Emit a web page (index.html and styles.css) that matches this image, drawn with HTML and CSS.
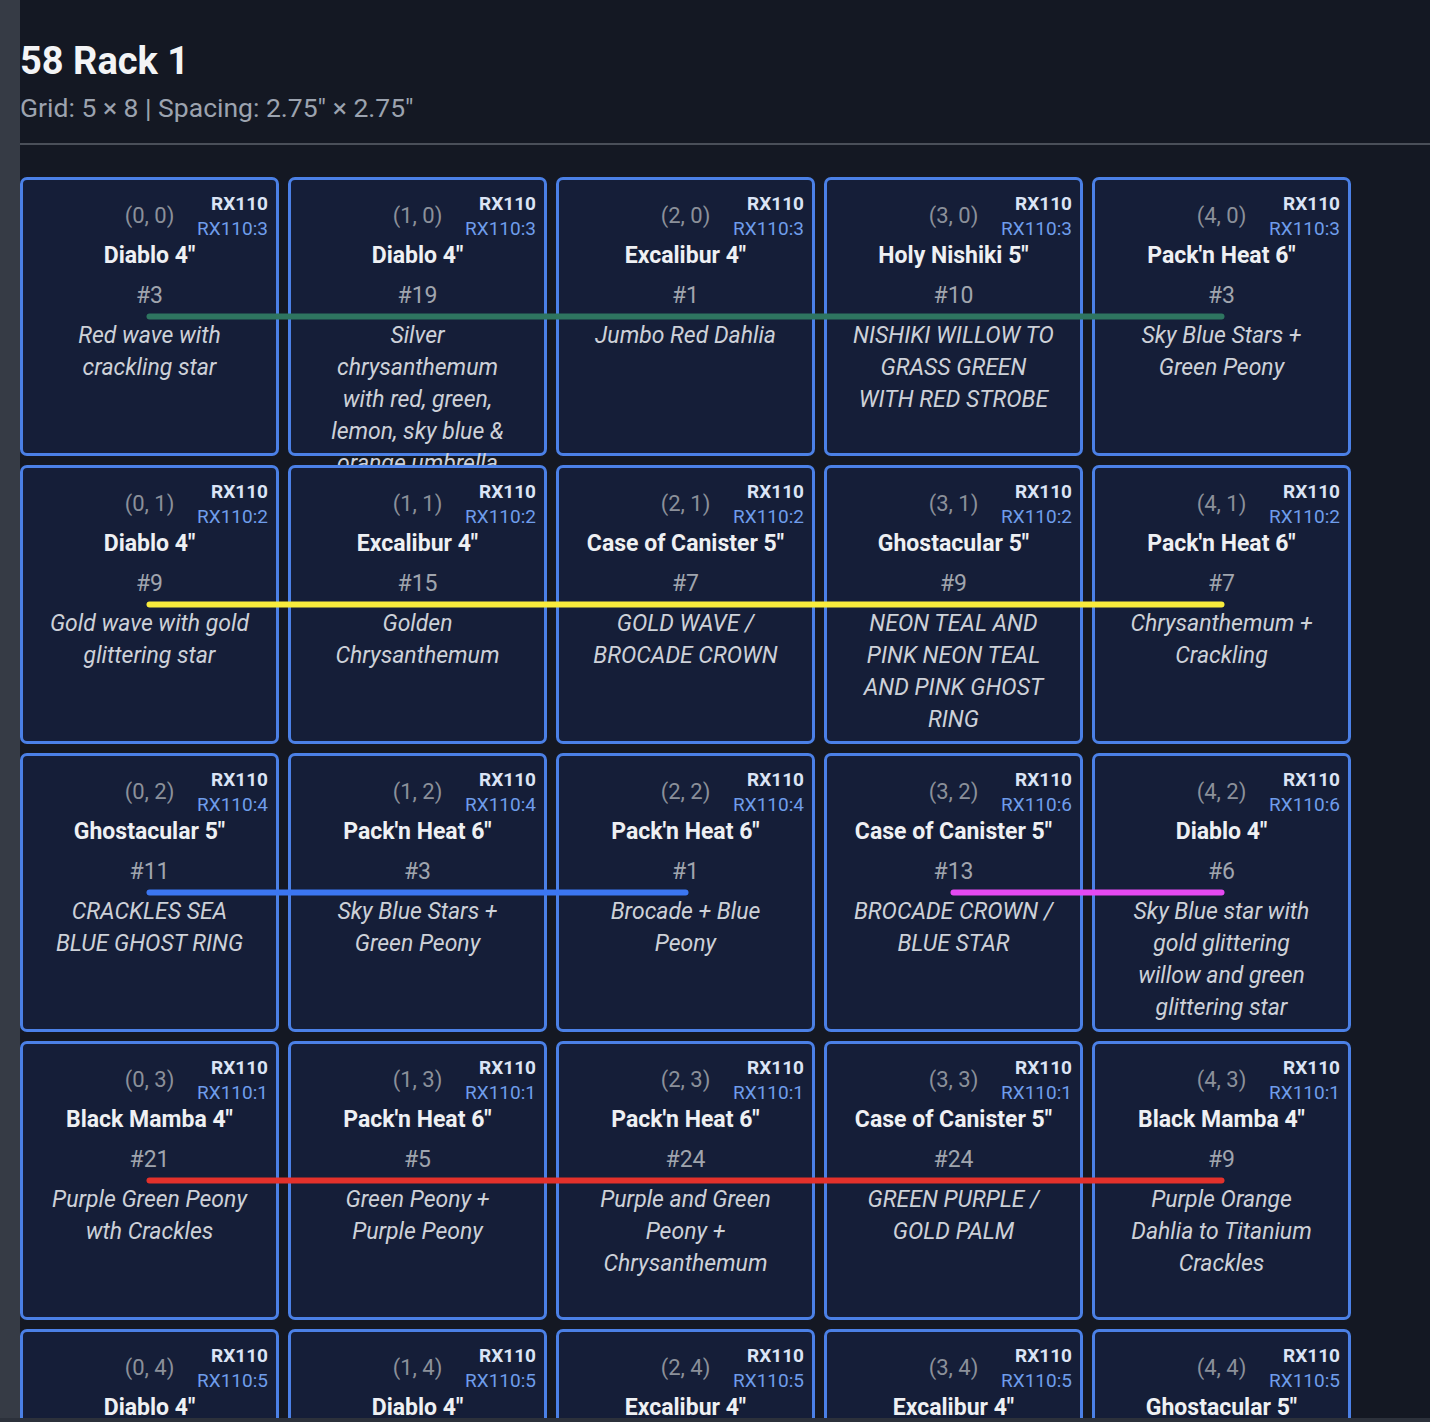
FILE: index.html
```html
<!DOCTYPE html>
<html lang="en">
<head>
<meta charset="utf-8">
<title>58 Rack 1</title>
<link rel="stylesheet" href="styles.css">
</head>
<body>
<div class="app">
  <aside class="sidebar"></aside>
  <main class="main">
    <header class="header">
      <h1 class="title">58 Rack 1</h1>
      <p class="subtitle">Grid: 5 × 8 | Spacing: 2.75" × 2.75"</p>
    </header>
    <section class="rack">
      <div class="grid">
        <div class="cell"><div class="badge"><span class="b-main">RX110</span><span class="b-sub">RX110:3</span></div><div class="coord">(0, 0)</div><div class="name">Diablo 4"</div><div class="num">#3</div><div class="desc">Red wave with crackling star</div></div>
        <div class="cell"><div class="badge"><span class="b-main">RX110</span><span class="b-sub">RX110:3</span></div><div class="coord">(1, 0)</div><div class="name">Diablo 4"</div><div class="num">#19</div><div class="desc">Silver chrysanthemum with red, green, lemon, sky blue &amp; orange umbrella</div></div>
        <div class="cell"><div class="badge"><span class="b-main">RX110</span><span class="b-sub">RX110:3</span></div><div class="coord">(2, 0)</div><div class="name">Excalibur 4"</div><div class="num">#1</div><div class="desc">Jumbo Red Dahlia</div></div>
        <div class="cell"><div class="badge"><span class="b-main">RX110</span><span class="b-sub">RX110:3</span></div><div class="coord">(3, 0)</div><div class="name">Holy Nishiki 5"</div><div class="num">#10</div><div class="desc">NISHIKI WILLOW TO GRASS GREEN WITH RED STROBE</div></div>
        <div class="cell"><div class="badge"><span class="b-main">RX110</span><span class="b-sub">RX110:3</span></div><div class="coord">(4, 0)</div><div class="name">Pack'n Heat 6"</div><div class="num">#3</div><div class="desc">Sky Blue Stars + Green Peony</div></div>

        <div class="cell"><div class="badge"><span class="b-main">RX110</span><span class="b-sub">RX110:2</span></div><div class="coord">(0, 1)</div><div class="name">Diablo 4"</div><div class="num">#9</div><div class="desc">Gold wave with gold glittering star</div></div>
        <div class="cell"><div class="badge"><span class="b-main">RX110</span><span class="b-sub">RX110:2</span></div><div class="coord">(1, 1)</div><div class="name">Excalibur 4"</div><div class="num">#15</div><div class="desc">Golden Chrysanthemum</div></div>
        <div class="cell"><div class="badge"><span class="b-main">RX110</span><span class="b-sub">RX110:2</span></div><div class="coord">(2, 1)</div><div class="name">Case of Canister 5"</div><div class="num">#7</div><div class="desc">GOLD WAVE / BROCADE CROWN</div></div>
        <div class="cell"><div class="badge"><span class="b-main">RX110</span><span class="b-sub">RX110:2</span></div><div class="coord">(3, 1)</div><div class="name">Ghostacular 5"</div><div class="num">#9</div><div class="desc">NEON TEAL AND PINK NEON TEAL AND PINK GHOST RING</div></div>
        <div class="cell"><div class="badge"><span class="b-main">RX110</span><span class="b-sub">RX110:2</span></div><div class="coord">(4, 1)</div><div class="name">Pack'n Heat 6"</div><div class="num">#7</div><div class="desc">Chrysanthemum + Crackling</div></div>

        <div class="cell"><div class="badge"><span class="b-main">RX110</span><span class="b-sub">RX110:4</span></div><div class="coord">(0, 2)</div><div class="name">Ghostacular 5"</div><div class="num">#11</div><div class="desc">CRACKLES SEA BLUE GHOST RING</div></div>
        <div class="cell"><div class="badge"><span class="b-main">RX110</span><span class="b-sub">RX110:4</span></div><div class="coord">(1, 2)</div><div class="name">Pack'n Heat 6"</div><div class="num">#3</div><div class="desc">Sky Blue Stars + Green Peony</div></div>
        <div class="cell"><div class="badge"><span class="b-main">RX110</span><span class="b-sub">RX110:4</span></div><div class="coord">(2, 2)</div><div class="name">Pack'n Heat 6"</div><div class="num">#1</div><div class="desc">Brocade + Blue Peony</div></div>
        <div class="cell"><div class="badge"><span class="b-main">RX110</span><span class="b-sub">RX110:6</span></div><div class="coord">(3, 2)</div><div class="name">Case of Canister 5"</div><div class="num">#13</div><div class="desc">BROCADE CROWN / BLUE STAR</div></div>
        <div class="cell"><div class="badge"><span class="b-main">RX110</span><span class="b-sub">RX110:6</span></div><div class="coord">(4, 2)</div><div class="name">Diablo 4"</div><div class="num">#6</div><div class="desc">Sky Blue star with gold glittering willow and green glittering star</div></div>

        <div class="cell"><div class="badge"><span class="b-main">RX110</span><span class="b-sub">RX110:1</span></div><div class="coord">(0, 3)</div><div class="name">Black Mamba 4"</div><div class="num">#21</div><div class="desc">Purple Green Peony wth Crackles</div></div>
        <div class="cell"><div class="badge"><span class="b-main">RX110</span><span class="b-sub">RX110:1</span></div><div class="coord">(1, 3)</div><div class="name">Pack'n Heat 6"</div><div class="num">#5</div><div class="desc">Green Peony + Purple Peony</div></div>
        <div class="cell"><div class="badge"><span class="b-main">RX110</span><span class="b-sub">RX110:1</span></div><div class="coord">(2, 3)</div><div class="name">Pack'n Heat 6"</div><div class="num">#24</div><div class="desc">Purple and Green Peony + Chrysanthemum</div></div>
        <div class="cell"><div class="badge"><span class="b-main">RX110</span><span class="b-sub">RX110:1</span></div><div class="coord">(3, 3)</div><div class="name">Case of Canister 5"</div><div class="num">#24</div><div class="desc">GREEN PURPLE / GOLD PALM</div></div>
        <div class="cell"><div class="badge"><span class="b-main">RX110</span><span class="b-sub">RX110:1</span></div><div class="coord">(4, 3)</div><div class="name">Black Mamba 4"</div><div class="num">#9</div><div class="desc">Purple Orange Dahlia to Titanium Crackles</div></div>

        <div class="cell"><div class="badge"><span class="b-main">RX110</span><span class="b-sub">RX110:5</span></div><div class="coord">(0, 4)</div><div class="name">Diablo 4"</div><div class="num">#2</div><div class="desc">Red wave with crackling star</div></div>
        <div class="cell"><div class="badge"><span class="b-main">RX110</span><span class="b-sub">RX110:5</span></div><div class="coord">(1, 4)</div><div class="name">Diablo 4"</div><div class="num">#12</div><div class="desc">Gold wave with gold glittering star</div></div>
        <div class="cell"><div class="badge"><span class="b-main">RX110</span><span class="b-sub">RX110:5</span></div><div class="coord">(2, 4)</div><div class="name">Excalibur 4"</div><div class="num">#4</div><div class="desc">Jumbo Red Dahlia</div></div>
        <div class="cell"><div class="badge"><span class="b-main">RX110</span><span class="b-sub">RX110:5</span></div><div class="coord">(3, 4)</div><div class="name">Excalibur 4"</div><div class="num">#8</div><div class="desc">Golden Chrysanthemum</div></div>
        <div class="cell"><div class="badge"><span class="b-main">RX110</span><span class="b-sub">RX110:5</span></div><div class="coord">(4, 4)</div><div class="name">Ghostacular 5"</div><div class="num">#2</div><div class="desc">CRACKLES SEA BLUE GHOST RING</div></div>
      </div>
      <svg class="wires" width="1331" height="1431" viewBox="0 0 1331 1431" aria-hidden="true">
        <g stroke-width="6" stroke-linecap="round" fill="none">
          <line x1="129.5" y1="139.5" x2="1201.5" y2="139.5" stroke="#2e7560"/>
          <line x1="129.5" y1="427.5" x2="1201.5" y2="427.5" stroke="#f8ec3c"/>
          <line x1="129.5" y1="715.5" x2="665.5" y2="715.5" stroke="#3b76f2"/>
          <line x1="933.5" y1="715.5" x2="1201.5" y2="715.5" stroke="#e449f2"/>
          <line x1="129.5" y1="1003.5" x2="1201.5" y2="1003.5" stroke="#e3312b"/>
        </g>
      </svg>
    </section>
  </main>
</div>
<div class="hscroll"></div>
</body>
</html>
```

FILE: styles.css
```css
* { box-sizing: border-box; }

html, body {
  margin: 0;
  padding: 0;
  background: #141823;
  font-family: Roboto, "Noto Sans", "Liberation Sans", sans-serif;
  color: #e5e7eb;
}

.app {
  display: flex;
  min-height: 100vh;
}

.sidebar {
  width: 20px;
  flex: 0 0 20px;
  background: #363b45;
}

.main {
  flex: 1;
  min-width: 0;
  padding: 0 0 40px 0;
}

.header {
  padding-top: 36px;
  border-bottom: 2px solid #4a4f59;
  padding-bottom: 15px;
}

.title {
  margin: 0;
  font-size: 38px;
  line-height: 50px;
  font-weight: 700;
  color: #f3f4f6;
}

.subtitle {
  margin: 2px 0 0;
  font-size: 26.5px;
  line-height: 40px;
  color: #9ca3af;
}

.rack {
  position: relative;
  margin-top: 32px;
  width: 1331px;
}

.grid {
  display: grid;
  grid-template-columns: repeat(5, 259px);
  grid-auto-rows: 279px;
  column-gap: 9px;
  row-gap: 9px;
}

.cell {
  position: relative;
  border: 3px solid #4b80e6;
  border-radius: 7px;
  background: #151e38;
  padding: 22px 0 0;
  text-align: center;
}

.badge {
  position: absolute;
  top: 11px;
  right: 8px;
  display: flex;
  flex-direction: column;
  align-items: flex-end;
  font-size: 19px;
  line-height: 25px;
}

.b-main {
  font-weight: 700;
  color: #dbe4f5;
}

.b-sub {
  color: #6f9deb;
}

.coord {
  font-size: 22px;
  line-height: 28px;
  color: #8b909a;
}

.name {
  margin-top: 12px;
  font-size: 23px;
  line-height: 28px;
  font-weight: 700;
  color: #eef0f3;
}

.num {
  margin-top: 12px;
  font-size: 23px;
  line-height: 28px;
  color: #a0a5ae;
}

.desc {
  width: 202px;
  margin: 10px auto 0;
  font-size: 23px;
  line-height: 32px;
  font-style: italic;
  color: #cdd1d8;
}

.wires {
  position: absolute;
  left: 0;
  top: 0;
  pointer-events: none;
}

.hscroll {
  position: fixed;
  left: 0;
  right: 0;
  bottom: 0;
  height: 4px;
  background: #2c313b;
}
```
